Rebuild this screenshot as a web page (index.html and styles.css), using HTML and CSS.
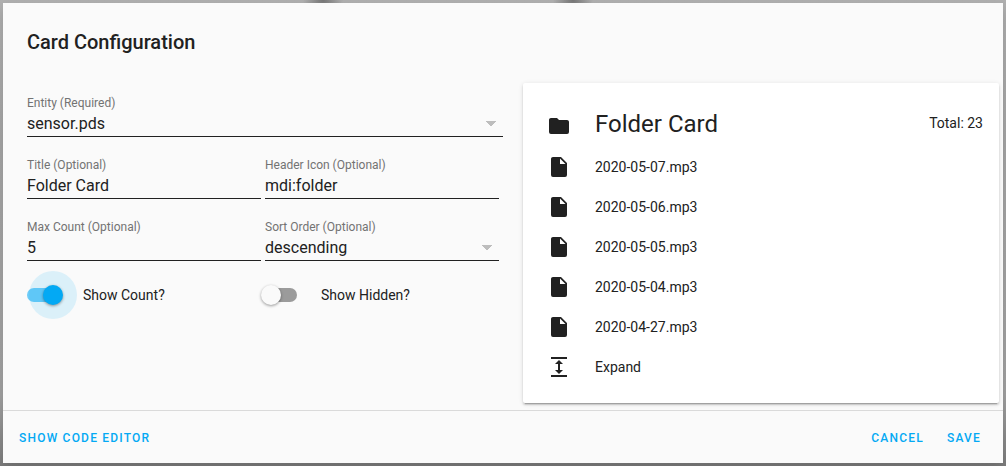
FILE: index.html
```html
<!DOCTYPE html>
<html lang="en">
<head>
<meta charset="utf-8">
<meta name="viewport" content="width=device-width, initial-scale=1">
<title>Card Configuration</title>
<link rel="stylesheet" href="styles.css">
</head>
<body class="backdrop">
<svg class="sprite" aria-hidden="true">
  <symbol id="icon-folder" viewBox="0 0 24 24"><path d="M10 4H4c-1.11 0-2 .89-2 2v12a2 2 0 0 0 2 2h16a2 2 0 0 0 2-2V8c0-1.11-.9-2-2-2h-8l-2-2z"/></symbol>
  <symbol id="icon-file" viewBox="0 0 24 24"><path d="M13 9V3.500L18.500 9M6 2c-1.110 0-2 .89-2 2v16a2 2 0 0 0 2 2h12a2 2 0 0 0 2-2V8l-6-6H6z"/></symbol>
  <symbol id="icon-expand" viewBox="0 0 24 24"><path d="M13 9v6h3l-4 4-4-4h3V9H8l4-4 4 4h-3M4 2h16v2H4V2m0 18h16v2H4v-2z"/></symbol>
</svg>
<main class="dialog" role="dialog" aria-labelledby="dialog-title">
  <h1 class="dialog-title" id="dialog-title">Card Configuration</h1>
  <div class="content">
    <form class="editor">
      <div class="field field-wide">
        <label class="field-label" for="entity">Entity (Required)</label>
        <select class="field-control field-select" id="entity"><option>sensor.pds</option></select>
      </div>
      <div class="field">
        <label class="field-label" for="title">Title (Optional)</label>
        <input class="field-control" id="title" type="text" value="Folder Card">
      </div>
      <div class="field">
        <label class="field-label" for="icon">Header Icon (Optional)</label>
        <input class="field-control" id="icon" type="text" value="mdi:folder">
      </div>
      <div class="field">
        <label class="field-label" for="count">Max Count (Optional)</label>
        <input class="field-control" id="count" type="text" inputmode="numeric" value="5">
      </div>
      <div class="field">
        <label class="field-label" for="sort">Sort Order (Optional)</label>
        <select class="field-control field-select" id="sort"><option>descending</option><option>ascending</option></select>
      </div>
      <label class="toggle"><input class="switch" type="checkbox" checked>Show Count?</label>
      <label class="toggle"><input class="switch" type="checkbox">Show Hidden?</label>
    </form>
    <section class="card">
      <header class="card-header">
        <svg class="icon card-icon" aria-hidden="true"><use href="#icon-folder"/></svg>
        <h2 class="card-title">Folder Card</h2>
        <span class="card-total">Total: 23</span>
      </header>
      <ul class="files">
        <li class="row"><svg class="icon" aria-hidden="true"><use href="#icon-file"/></svg>2020-05-07.mp3</li>
        <li class="row"><svg class="icon" aria-hidden="true"><use href="#icon-file"/></svg>2020-05-06.mp3</li>
        <li class="row"><svg class="icon" aria-hidden="true"><use href="#icon-file"/></svg>2020-05-05.mp3</li>
        <li class="row"><svg class="icon" aria-hidden="true"><use href="#icon-file"/></svg>2020-05-04.mp3</li>
        <li class="row"><svg class="icon" aria-hidden="true"><use href="#icon-file"/></svg>2020-04-27.mp3</li>
      </ul>
      <button class="row expand" type="button"><svg class="icon" aria-hidden="true"><use href="#icon-expand"/></svg>Expand</button>
    </section>
  </div>
  <footer class="actions">
    <button class="action" type="button">SHOW CODE EDITOR</button>
    <div class="actions-end">
      <button class="action" type="button">CANCEL</button>
      <button class="action" type="button">SAVE</button>
    </div>
  </footer>
</main>
</body>
</html>
```
FILE: styles.css
```css
:root {
  --text: #212121;
  --muted: #737373;
  --accent: #03a9f4;
  --surface: #fafafa;
}

* {
  box-sizing: border-box;
}

.backdrop {
  margin: 0;
  padding: 3px;
  min-height: 100vh;
  color: var(--text);
  font: 14px/20px Roboto, "Liberation Sans", sans-serif;
  background:
    radial-gradient(circle 20px at 323px 0, #777, transparent) no-repeat,
    radial-gradient(circle 20px at 573px 0, #777, transparent) no-repeat,
    linear-gradient(#b0b0b0, #a6a6a6 30%, #a2a2a2 85%, #7d7d7d);
}

.sprite {
  display: none;
}

.dialog {
  display: flex;
  flex-direction: column;
  background: var(--surface);
  box-shadow: 0 6px 12px rgba(0, 0, 0, .15);
}

.dialog-title {
  margin: 0;
  padding: 23px 24px 1px;
  font-size: 20px;
  font-weight: 500;
  line-height: 32px;
}

.content {
  display: grid;
  grid-template-columns: 1fr 1fr;
  gap: 20px;
  align-items: start;
  padding: 24px 4px 7px 24px;
}

.editor {
  display: grid;
  grid-template-columns: 1fr 1fr;
}

.field {
  display: flex;
  flex-direction: column;
  padding: 10px 4px 8px 0;
}

.field-wide {
  grid-column: 1 / -1;
  padding-right: 0;
}

.field-label {
  color: var(--muted);
  font-size: 12px;
  line-height: 20px;
}

.field-control {
  width: 100%;
  height: 24px;
  margin: 0;
  padding: 0 0 2px;
  border: 0;
  border-bottom: 1px solid var(--text);
  border-radius: 0;
  outline: 0;
  appearance: none;
  background: transparent;
  color: inherit;
  font: 16px/20px Roboto, "Liberation Sans", sans-serif;
}

.field-select {
  background:
    linear-gradient(to bottom left, #bdbdbd 50%, transparent 51%) right 12px top 8px / 5px 5px no-repeat,
    linear-gradient(to bottom right, #bdbdbd 50%, transparent 51%) right 7px top 8px / 5px 5px no-repeat;
}

.toggle {
  display: flex;
  align-items: center;
  gap: 24px;
  height: 52px;
}

.switch {
  position: relative;
  flex: none;
  width: 32px;
  height: 14px;
  margin: 0;
  border-radius: 7px;
  appearance: none;
  background: #9b9b9b;
}

.switch::before {
  content: "";
  position: absolute;
  z-index: 1;
  top: -3px;
  left: -4px;
  width: 20px;
  height: 20px;
  border-radius: 50%;
  background: var(--surface);
  box-shadow: 0 1px 3px rgba(0, 0, 0, .4);
}

.switch:checked {
  background: #6dcbf7;
}

.switch:checked::before {
  left: 16px;
  background: var(--accent);
}

.switch:checked::after {
  content: "";
  position: absolute;
  top: -17px;
  left: 2px;
  width: 48px;
  height: 48px;
  border-radius: 50%;
  background: rgba(3, 169, 244, .12);
}

.card {
  padding: 16px 0;
  border-radius: 2px;
  background: #fff;
  box-shadow: 0 2px 2px rgba(0, 0, 0, .14), 0 1px 5px rgba(0, 0, 0, .12), 0 3px 1px -2px rgba(0, 0, 0, .2);
}

.card-header,
.row {
  display: flex;
  align-items: center;
  gap: 24px;
  padding: 0 16px 0 24px;
}

.card-header {
  height: 48px;
}

.card-icon {
  margin-top: 6px;
}

.card-title {
  flex: 1;
  margin: 0;
  padding-top: 2px;
  font-size: 24px;
  font-weight: 400;
  line-height: 32px;
}

.files {
  margin: 0;
  padding: 0;
  list-style: none;
}

.row {
  height: 40px;
}

.expand {
  width: 100%;
  border: 0;
  background: transparent;
  color: inherit;
  font: inherit;
}

.icon {
  flex: none;
  width: 24px;
  height: 24px;
  fill: currentColor;
}

.actions {
  display: flex;
  justify-content: space-between;
  padding: 9px 14px 7px 8px;
  border-top: 1px solid #dadada;
}

.actions-end {
  display: flex;
  gap: 7px;
}

.action {
  height: 36px;
  padding: 0 8px;
  border: 0;
  background: transparent;
  color: var(--accent);
  font: 500 12px/36px Roboto, "Liberation Sans", sans-serif;
  letter-spacing: 0.1em;
}
```
